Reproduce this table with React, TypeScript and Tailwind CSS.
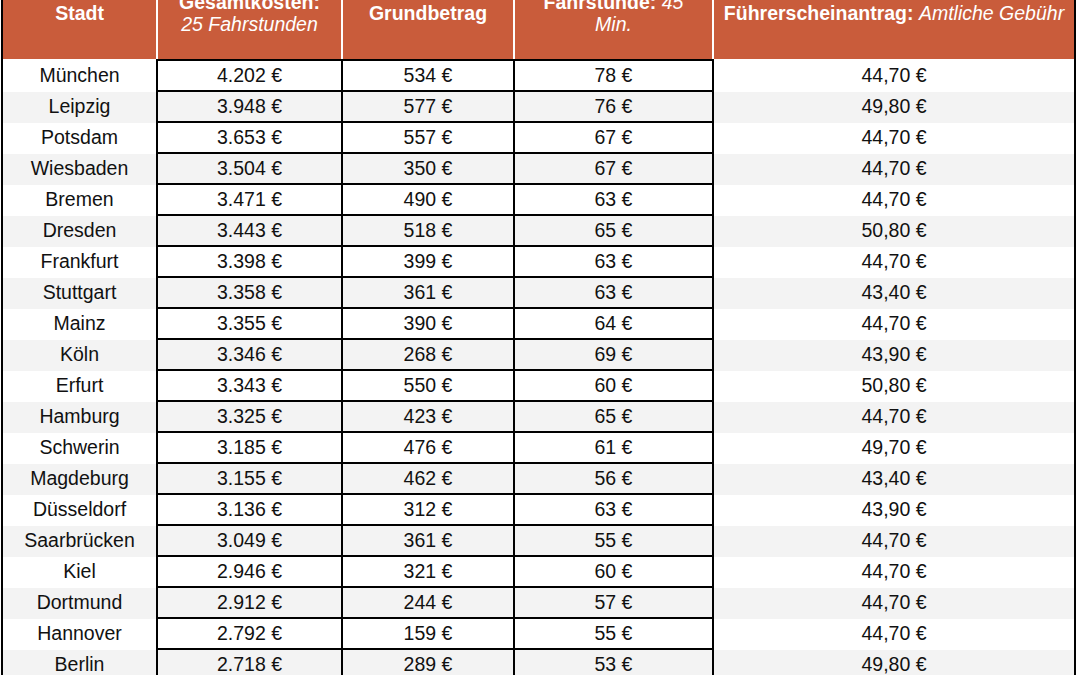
const staedte = [
    ["München", "4.202 €", "534 €", "78 €", "44,70 €"],
    ["Leipzig", "3.948 €", "577 €", "76 €", "49,80 €"],
    ["Potsdam", "3.653 €", "557 €", "67 €", "44,70 €"],
    ["Wiesbaden", "3.504 €", "350 €", "67 €", "44,70 €"],
    ["Bremen", "3.471 €", "490 €", "63 €", "44,70 €"],
    ["Dresden", "3.443 €", "518 €", "65 €", "50,80 €"],
    ["Frankfurt", "3.398 €", "399 €", "63 €", "44,70 €"],
    ["Stuttgart", "3.358 €", "361 €", "63 €", "43,40 €"],
    ["Mainz", "3.355 €", "390 €", "64 €", "44,70 €"],
    ["Köln", "3.346 €", "268 €", "69 €", "43,90 €"],
    ["Erfurt", "3.343 €", "550 €", "60 €", "50,80 €"],
    ["Hamburg", "3.325 €", "423 €", "65 €", "44,70 €"],
    ["Schwerin", "3.185 €", "476 €", "61 €", "49,70 €"],
    ["Magdeburg", "3.155 €", "462 €", "56 €", "43,40 €"],
    ["Düsseldorf", "3.136 €", "312 €", "63 €", "43,90 €"],
    ["Saarbrücken", "3.049 €", "361 €", "55 €", "44,70 €"],
    ["Kiel", "2.946 €", "321 €", "60 €", "44,70 €"],
    ["Dortmund", "2.912 €", "244 €", "57 €", "44,70 €"],
    ["Hannover", "2.792 €", "159 €", "55 €", "44,70 €"],
    ["Berlin", "2.718 €", "289 €", "53 €", "49,80 €"],
];

const App = () => {
    return (
        <div className="w-[1080px] h-[675px] overflow-hidden bg-white font-['Liberation_Sans',Arial,sans-serif] text-[19.5px]">
            <div className="ml-[1px] w-[1075px] border-x-2 border-black mt-[-34px]">
                {/* Kopfzeile */}
                <div className="flex h-[93px] bg-[#c95c3b] text-white leading-[22px] text-center">
                    <div className="w-[153px] flex items-center justify-center font-bold">Stadt</div>
                    <div className="w-[185px] border-l-2 border-white flex items-center justify-center px-3">
                        <p><span className="font-bold">Gesamtkosten:</span> <i>25 Fahrstunden</i></p>
                    </div>
                    <div className="w-[172px] border-l-2 border-white flex items-center justify-center font-bold">Grundbetrag</div>
                    <div className="w-[199px] border-l-2 border-white flex items-center justify-center px-3">
                        <p><span className="font-bold">Fahrstunde:</span> <i>45 Min.</i></p>
                    </div>
                    <div className="w-[362px] border-l-2 border-white flex items-center justify-center px-1 whitespace-nowrap">
                        <p><span className="font-bold">Führerscheinantrag:</span> <i>Amtliche Gebühr</i></p>
                    </div>
                </div>

                {/* Zeilen */}
                {staedte.map((row, index) => (
                    <div
                        key={row[0]}
                        className={`flex text-[#111] text-center leading-[29px] ${index % 2 === 0 ? 'bg-white' : 'bg-[#f3f3f3]'}`}
                    >
                        <div className={`w-[153px] ${index === 0 ? 'pt-[2px]' : ''} pb-[2px]`}>{row[0]}</div>
                        <div className={`w-[185px] border-l-2 border-b-2 border-black ${index === 0 ? 'border-t-2' : ''}`}>{row[1]}</div>
                        <div className={`w-[172px] border-l-2 border-b-2 border-black ${index === 0 ? 'border-t-2' : ''}`}>{row[2]}</div>
                        <div className={`w-[201px] border-x-2 border-b-2 border-black ${index === 0 ? 'border-t-2' : ''}`}>{row[3]}</div>
                        <div className={`w-[360px] ${index === 0 ? 'pt-[2px]' : ''} pb-[2px]`}>{row[4]}</div>
                    </div>
                ))}
            </div>
        </div>
    );
};

export default App;
